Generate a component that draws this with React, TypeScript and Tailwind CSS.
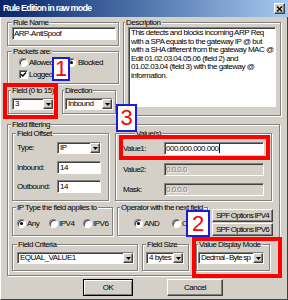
import React from "react";

const SUNKEN =
  "border border-t-[#808080] border-l-[#808080] border-b-white border-r-white shadow-[inset_1px_1px_0_#404040]";
const RAISED =
  "border border-t-white border-l-white border-b-[#404040] border-r-[#404040] shadow-[inset_-1px_-1px_0_#808080]";
const GROUP =
  "relative border border-[#808080] shadow-[inset_1px_1px_0_#fff,1px_1px_0_#fff]";

function Label({ text, className }: { text: string; className: string }) {
  return (
    <span
      className={`absolute -top-[5px] px-[1px] leading-[9px] bg-[#d4d0c8] whitespace-nowrap ${className}`}
    >
      {text}
    </span>
  );
}

function Combo({
  text,
  className,
  textClass,
}: {
  text: string;
  className: string;
  textClass?: string;
}) {
  return (
    <div className={`${SUNKEN} bg-white flex items-stretch ${className}`}>
      <span
        className={`flex-1 pl-[2px] leading-[10px] overflow-hidden whitespace-nowrap ${textClass ?? ""}`}
      >
        {text}
      </span>
      <span
        className={`w-[10px] shrink-0 bg-[#d4d0c8] ${RAISED} flex items-center justify-center`}
      >
        <svg width="5" height="3" viewBox="0 0 5 3">
          <path d="M0 0H5L2.5 3Z" fill="#000" />
        </svg>
      </span>
    </div>
  );
}

function Edit({
  children,
  className,
  disabled,
}: {
  children: React.ReactNode;
  className: string;
  disabled?: boolean;
}) {
  return (
    <div
      className={`${SUNKEN} ${
        disabled
          ? "bg-[#d4d0c8] text-[#808080] [text-shadow:1px_1px_0_#fff]"
          : "bg-white"
      } pl-[1px] leading-[11px] whitespace-nowrap overflow-hidden ${className}`}
    >
      {children}
    </div>
  );
}

function Radio({ checked }: { checked?: boolean }) {
  return (
    <span className="w-[9px] h-[9px] shrink-0 rounded-full bg-white border border-t-[#808080] border-l-[#808080] border-b-white border-r-white shadow-[inset_1px_1px_0_#404040] flex items-center justify-center">
      {checked && <span className="w-[3px] h-[3px] rounded-full bg-black" />}
    </span>
  );
}

function Check() {
  return (
    <span className="w-[9px] h-[9px] shrink-0 bg-white border border-t-[#808080] border-l-[#808080] border-b-white border-r-white shadow-[inset_1px_1px_0_#404040] flex items-center justify-center">
      <svg width="7" height="7" viewBox="0 0 7 7">
        <path d="M1 3.2L2.8 5L6 1.6" stroke="#000" strokeWidth="1.4" fill="none" />
      </svg>
    </span>
  );
}

function Marker({ n, className }: { n: string; className: string }) {
  return (
    <div
      className={`absolute bg-white border-2 border-[#1c1cd8] flex items-center justify-center text-[#ff0000] text-[22px] leading-none tracking-normal ${className}`}
    >
      {n}
    </div>
  );
}

export default function App() {
  return (
    <div className="relative w-[288px] h-[300px] bg-[#d4d0c8] text-black text-[8px] tracking-[-0.5px] font-['Liberation_Sans',Arial,sans-serif] overflow-hidden">
      {/* Title bar */}
      <div className="h-[17px] flex items-center pl-[3px] pr-[3px] bg-linear-to-r from-[#0a246a] to-[#a6caf0]">
        <span className="text-white font-bold text-[9px] tracking-[-0.8px] leading-none">
          Rule Edition in raw mode
        </span>
        <span
          className={`ml-auto w-[11px] h-[11px] bg-[#d4d0c8] ${RAISED} flex items-center justify-center`}
        >
          <svg width="7" height="6" viewBox="0 0 7 6">
            <path d="M1 0.5L6 5.5M6 0.5L1 5.5" stroke="#000" strokeWidth="1.4" />
          </svg>
        </span>
      </div>

      {/* Body */}
      <div className="h-[283px] border-l border-l-white border-r border-r-[#404040] border-b border-b-[#404040] pl-[6px] flex flex-col">
        {/* Row 1 */}
        <div className="flex mt-[5px]">
          <div className="w-[112px] flex flex-col">
            <div className={`${GROUP} w-[112px] h-[24px] pl-[4px] pt-[4px]`}>
              <Label text="Rule Name" className="left-[4px]" />
              <Edit className="w-[104px] h-[13px]">ARP-AntiSpoof</Edit>
            </div>
            <div className={`${GROUP} mt-[5px] w-[112px] h-[33px] pl-[11px] pt-[6px]`}>
              <Label text="Packets are:" className="left-[4px]" />
              <div className="flex items-center h-[9px]">
                <div className="w-[48px] flex items-center gap-[1px]">
                  <Radio />
                  <span>Allowed</span>
                </div>
                <div className="flex items-center gap-[2px]">
                  <Radio checked />
                  <span>Blocked</span>
                </div>
              </div>
              <div className="flex items-center gap-[1px] h-[9px] mt-[3px]">
                <Check />
                <span>Logged</span>
              </div>
            </div>
            <div className="flex mt-[6px]">
              <div className={`${GROUP} ml-[1px] w-[48px] h-[24px] pl-[3px] pt-[7px]`}>
                <Label text="Field (0 to 15)" className="left-[2px]" />
                <Combo text="3" className="w-[42px] h-[12px]" />
              </div>
              <div className={`${GROUP} ml-[6px] w-[54px] h-[24px] pl-[2px] pt-[7px]`}>
                <Label text="Direction" className="left-[1px]" />
                <Combo text="Inbound" className="w-[48px] h-[12px]" />
              </div>
            </div>
          </div>
          <div className={`${GROUP} ml-[4px] w-[158px] h-[94px] pl-[4px] pt-[4px]`}>
            <Label text="Description" className="left-[1px]" />
            <div
              className={`${SUNKEN} bg-white w-[148px] h-[80px] pl-[2px] pt-[1px] leading-[8.6px] overflow-hidden whitespace-nowrap`}
            >
              <div>This detects and blocks incoming ARP Req</div>
              <div>with a SPA equals to the gateway IP @ but</div>
              <div>with a SHA different from the gateway MAC @</div>
              <div>Edit 01.02.03.04.05.06 (field 2) and</div>
              <div>01.02.03.04 (field 3) with the gateway @</div>
              <div>information.</div>
            </div>
          </div>
        </div>

        {/* Field filtering */}
        <div className={`${GROUP} mt-[8px] w-[273px] h-[152px] pl-[4px] pt-[8px]`}>
          <Label text="Field filtering" className="left-[3px]" />
          {/* Row A */}
          <div className="flex">
            <div className={`${GROUP} w-[97px] h-[68px] pl-[4px] pt-[8px]`}>
              <Label text="Field Offset" className="left-[3px]" />
              <div className="flex items-center h-[12px]">
                <span className="w-[40px]">Type:</span>
                <Combo text="IP" className="w-[44px] h-[12px]" />
              </div>
              <div className="flex items-center h-[13px] mt-[7px]">
                <span className="w-[40px]">Inbound:</span>
                <Edit className="w-[44px] h-[13px] pl-[2px]">14</Edit>
              </div>
              <div className="flex items-center h-[13px] mt-[6px]">
                <span className="w-[40px]">Outbound:</span>
                <Edit className="w-[44px] h-[13px] pl-[2px]">14</Edit>
              </div>
            </div>
            <div className={`${GROUP} ml-[6px] w-[157px] h-[68px] pl-[7px] pt-[8px]`}>
              <Label text="Value(s)" className="left-[19px]" />
              <div className="flex items-center h-[13px]">
                <span className="w-[41px]">Value1:</span>
                <Edit className="w-[100px] h-[13px]">
                  000.000.000.000
                  <span className="inline-block w-[1px] h-[9px] bg-black align-middle" />
                </Edit>
              </div>
              <div className="flex items-center h-[13px] mt-[8px]">
                <span className="w-[41px]">Value2:</span>
                <Edit disabled className="w-[100px] h-[13px]">
                  0.0.0.0
                </Edit>
              </div>
              <div className="flex items-center h-[13px] mt-[7px]">
                <span className="w-[41px]">Mask:</span>
                <Edit disabled className="w-[100px] h-[13px]">
                  0.0.0.0
                </Edit>
              </div>
            </div>
          </div>

          {/* Row B */}
          <div className="flex mt-[6px]">
            <div className={`${GROUP} w-[101px] h-[29px] pl-[4px] pt-[11px]`}>
              <Label text="IP Type the field applies to" className="left-[3px]" />
              <div className="flex items-center h-[9px]">
                <div className="w-[32px] flex items-center gap-[1px]">
                  <Radio checked />
                  <span>Any</span>
                </div>
                <div className="w-[34px] flex items-center gap-[1px]">
                  <Radio />
                  <span>IPV4</span>
                </div>
                <div className="flex items-center gap-[1px]">
                  <Radio />
                  <span>IPV6</span>
                </div>
              </div>
            </div>
            <div className={`${GROUP} ml-[4px] w-[91px] h-[29px] pl-[16px] pt-[11px]`}>
              <Label text="Operator with the next field" className="left-[2px]" />
              <div className="flex items-center h-[9px]">
                <div className="w-[38px] flex items-center gap-[1px]">
                  <Radio checked />
                  <span>AND</span>
                </div>
                <div className="flex items-center gap-[1px]">
                  <Radio />
                  <span>OR</span>
                </div>
              </div>
            </div>
            <div className="ml-[4px] mt-[2px] w-[61px] flex flex-col gap-[1px]">
              <div
                className={`h-[13px] bg-[#d4d0c8] ${RAISED} flex items-center justify-center whitespace-nowrap tracking-[-0.75px]`}
              >
                SPF Options IPV4
              </div>
              <div
                className={`h-[13px] bg-[#d4d0c8] ${RAISED} flex items-center justify-center whitespace-nowrap tracking-[-0.75px]`}
              >
                SPF Options IPV6
              </div>
            </div>
          </div>

          {/* Row C */}
          <div className="flex mt-[8px]">
            <div className={`${GROUP} w-[126px] h-[27px] pl-[4px] pt-[7px]`}>
              <Label text="Field Criteria" className="left-[4px]" />
              <Combo text="EQUAL_VALUE1" className="w-[117px] h-[12px]" />
            </div>
            <div className={`${GROUP} ml-[4px] w-[47px] h-[27px] pl-[3px] pt-[7px]`}>
              <Label text="Field Size" className="left-[3px]" />
              <Combo text="4 bytes" className="w-[38px] h-[12px]" />
            </div>
            <div className={`${GROUP} ml-[7px] w-[74px] h-[27px] pl-[1px] pt-[7px]`}>
              <Label text="Value Display Mode" className="left-[1px]" />
              <Combo
                text="Decimal - Byte sp"
                className="w-[66px] h-[12px]"
                textClass="pl-[1px] tracking-[-0.8px]"
              />
            </div>
          </div>
        </div>

        {/* Buttons */}
        <div className="flex mt-[3px]">
          <div className="ml-[76px] w-[50px] h-[17px] bg-[#d4d0c8] border border-black shadow-[inset_1px_1px_0_#fff,inset_-1px_-1px_0_#808080] flex items-center justify-center">
            OK
          </div>
          <div
            className={`ml-[34px] w-[56px] h-[17px] bg-[#d4d0c8] ${RAISED} flex items-center justify-center`}
          >
            Cancel
          </div>
        </div>
      </div>

      {/* Annotation overlays */}
      <div className="absolute left-[3px] top-[83px] w-[55px] h-[36px] border-4 border-[#ff0000]" />
      <div className="absolute left-[119px] top-[135px] w-[151px] h-[25px] border-4 border-[#ff0000]" />
      <div className="absolute left-[192px] top-[237px] w-[90px] h-[41px] border-4 border-[#ff0000]" />
      <Marker n="1" className="left-[52px] top-[57px] w-[18px] h-[24px]" />
      <Marker n="3" className="left-[116px] top-[104px] w-[21px] h-[28px]" />
      <Marker n="2" className="left-[186px] top-[210px] w-[24px] h-[27px]" />
    </div>
  );
}
